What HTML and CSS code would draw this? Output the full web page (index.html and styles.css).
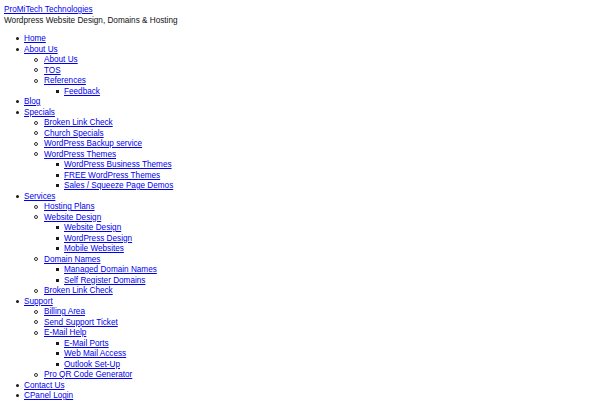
FILE: index.html
```html
<!DOCTYPE html>
<html>
<head>
<meta charset="utf-8">
<link rel="stylesheet" href="styles.css">
</head>
<body>
<div class="header">
  <a class="site-title" href="#">ProMiTech Technologies</a>
  <div class="tagline">Wordpress Website Design, Domains &amp; Hosting</div>
</div>
<ul class="menu">
  <li><a href="#">Home</a></li>
  <li><a href="#">About Us</a>
    <ul>
      <li><a href="#">About Us</a></li>
      <li><a href="#">TOS</a></li>
      <li><a href="#">References</a>
        <ul>
          <li><a href="#">Feedback</a></li>
        </ul>
      </li>
    </ul>
  </li>
  <li><a href="#">Blog</a></li>
  <li><a href="#">Specials</a>
    <ul>
      <li><a href="#">Broken Link Check</a></li>
      <li><a href="#">Church Specials</a></li>
      <li><a href="#">WordPress Backup service</a></li>
      <li><a href="#">WordPress Themes</a>
        <ul>
          <li><a href="#">WordPress Business Themes</a></li>
          <li><a href="#">FREE WordPress Themes</a></li>
          <li><a href="#">Sales / Squeeze Page Demos</a></li>
        </ul>
      </li>
    </ul>
  </li>
  <li><a href="#">Services</a>
    <ul>
      <li><a href="#">Hosting Plans</a></li>
      <li><a href="#">Website Design</a>
        <ul>
          <li><a href="#">Website Design</a></li>
          <li><a href="#">WordPress Design</a></li>
          <li><a href="#">Mobile Websites</a></li>
        </ul>
      </li>
      <li><a href="#">Domain Names</a>
        <ul>
          <li><a href="#">Managed Domain Names</a></li>
          <li><a href="#">Self Register Domains</a></li>
        </ul>
      </li>
      <li><a href="#">Broken Link Check</a></li>
    </ul>
  </li>
  <li><a href="#">Support</a>
    <ul>
      <li><a href="#">Billing Area</a></li>
      <li><a href="#">Send Support Ticket</a></li>
      <li><a href="#">E-Mail Help</a>
        <ul>
          <li><a href="#">E-Mail Ports</a></li>
          <li><a href="#">Web Mail Access</a></li>
          <li><a href="#">Outlook Set-Up</a></li>
        </ul>
      </li>
      <li><a href="#">Pro QR Code Generator</a></li>
    </ul>
  </li>
  <li><a href="#">Contact Us</a></li>
  <li><a href="#">CPanel Login</a></li>
</ul>
</body>
</html>
```
FILE: styles.css
```css
html, body {
  background: #ffffff;
}
body {
  margin: 5px 4px 4px 4px;
  font-family: "Liberation Sans", Arial, sans-serif;
  font-size: 8.2px;
  line-height: 10.5px;
  color: #111111;
}
a {
  color: #0000ee;
  text-decoration: underline;
}
.menu,
.menu ul {
  list-style: none;
  padding-left: 20px;
  margin: 0;
}
.menu {
  margin-top: 8px;
}
.menu li::before {
  content: "";
  display: inline-block;
  box-sizing: border-box;
  width: 3px;
  height: 3px;
  margin-left: -8px;
  margin-right: 5px;
  border-radius: 50%;
  background: #1a1a1a;
  vertical-align: middle;
}
.menu ul li::before {
  width: 4px;
  height: 4px;
  margin-left: -10px;
  margin-right: 6px;
  background: transparent;
  border: 1px solid #333333;
}
.menu ul ul li::before {
  width: 3px;
  height: 3px;
  margin-left: -8px;
  margin-right: 5px;
  border: none;
  border-radius: 0;
  background: #1a1a1a;
}
```
